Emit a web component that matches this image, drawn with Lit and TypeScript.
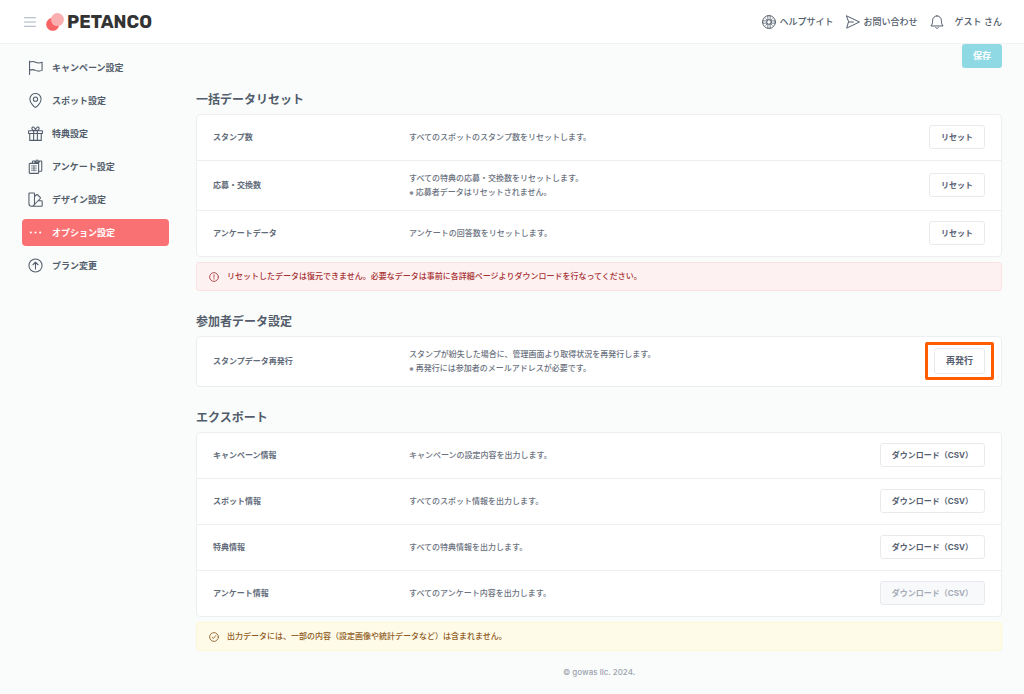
import { LitElement, html, css, svg, nothing } from "lit";
import { customElement, property } from "lit/decorators.js";
import { classMap } from "lit/directives/class-map.js";

const icons: Record<string, unknown> = {
  flag: svg`<path d="M2.500 23V1.800M2.500 3.600c3.400-1.900 6.400-1.500 9.500 0s6.200 1.800 10.500 0v13c-4.300 1.900-7.400 1.500-10.500 0s-6.100-1.900-9.500 0"/>`,
  pin: svg`<path d="M12 23c-1.500 0-9-7.600-9-13.200a9 9 0 0 1 18 0C21 15.400 13.500 23 12 23z"/><circle cx="12" cy="9.800" r="3.400"/>`,
  gift: svg`<path d="M1 7.500h22v4.500H1zM2.800 12v11h18.400V12M9 7.500V23M15 7.500V23M12 7.300C8 7.300 5.500 5.500 6.300 3 7.200.5 11.500 1.300 12 7.300zM12 7.300c4 0 6.500-1.800 5.700-4.300C16.800.5 12.500 1.300 12 7.300z"/>`,
  survey: svg`<path d="M6.500 7H3.200C2.500 7 2 7.500 2 8.200v13.600c0 .7.500 1.200 1.200 1.200h12.600c.7 0 1.200-.5 1.200-1.200V7H6.500zM7 7V4.500c0-.7.500-1.200 1.200-1.200h2.300M18 3.300h2.800c.7 0 1.200.5 1.200 1.200v13.800c0 .7-.5 1.200-1.200 1.200H17M11 5V3.500h1.500a2 2 0 0 1 4 0H18V5z"/><path stroke-width="1.200" d="M5.500 11h8M5.500 14.500h8M5.500 18h8M9.500 11v8"/>`,
  design: svg`<path d="M2.500 1.500h6.700c.7 0 1.200.5 1.200 1.200v15.800a4.300 4.300 0 0 1-8.900 0v-16c0-.5.400-1 1-1zM10.400 7.500l3.100-3.100c.5-.5 1.200-.5 1.700 0l4.300 4.300c.5.500.5 1.200 0 1.700L8.500 22M16.500 14h5c.7 0 1.200.5 1.200 1.200v6.300c0 .7-.5 1.200-1.200 1.200H6"/>`,
  dots: svg`<g fill="currentColor" stroke="none"><circle cx="4.500" cy="12" r="1.700"/><circle cx="12" cy="12" r="1.700"/><circle cx="19.500" cy="12" r="1.700"/></g>`,
  up: svg`<circle cx="12" cy="12" r="10.500"/><path d="M12 17.500V7M8 10.800 12 6.800l4 4"/>`,
  ring: svg`<circle cx="12" cy="12" r="11"/><circle cx="12" cy="12" r="4"/><path stroke-width="1.300" d="M10 1.500v6.800M14 1.500v6.800M10 15.700v6.800M14 15.700v6.800M1.500 10h6.800M1.500 14h6.800M15.700 10h6.800M15.700 14h6.800M6.500 6.500l2.500 2.500M17.500 6.500 15 9M6.500 17.500 9 15M17.500 17.500 15 15"/>`,
  send: svg`<path d="M1.200 1.500 23 12 1.200 22.500 4.200 12zM4.200 12h8.500"/>`,
  bell: svg`<path d="M12 1.500a7.500 7.500 0 0 1 7.500 7.500c0 6 1.200 8 3 9.800h-21c1.800-1.800 3-3.800 3-9.800A7.500 7.500 0 0 1 12 1.500zM9.500 21.300c.5 1.100 1.400 1.500 2.500 1.500s2-.4 2.500-1.500"/>`,
  menu: svg`<path d="M1 3.500h22M1 12h22M1 20.500h22"/>`,
  alert: svg`<circle cx="12" cy="12" r="10.500"/><path d="M12 6.800v6M12 15.800v1.200"/>`,
  check: svg`<circle cx="12" cy="12" r="10.500"/><path d="m7.500 13 2.800 2.500 6-7"/>`,
};

const icon = (name: string) => html`<svg class="icon icon-${name}" viewBox="0 0 24 24" aria-hidden="true">${icons[name]}</svg>`;

const shared = css`
  * {
    box-sizing: border-box;
  }
  .icon {
    display: block;
    flex: none;
    width: 14px;
    height: 14px;
    fill: none;
    stroke: currentColor;
    stroke-width: 1.700;
    stroke-linecap: round;
    stroke-linejoin: round;
  }
  button {
    font-family: inherit;
    cursor: pointer;
  }
  a {
    color: inherit;
    text-decoration: none;
  }
`;

interface Row {
  label: string;
  lines: string[];
  action: string;
  disabled?: boolean;
  marked?: boolean;
}

@customElement("app-header")
class AppHeader extends LitElement {
  static styles = [
    shared,
    css`
      :host {
        display: block;
      }
      .bar {
        display: flex;
        align-items: center;
        height: 44px;
        padding: 0 22px 0 24px;
        background: #fff;
        border-bottom: 1px solid #f0f2f3;
      }
      .menu {
        display: flex;
        padding: 0;
        border: 0;
        background: none;
        color: #a8b0be;
      }
      .icon-menu {
        width: 12px;
        height: 12px;
        stroke-width: 2;
      }
      .brand {
        display: flex;
        align-items: center;
        gap: 3px;
        margin-left: 10px;
        color: #333;
        font-family: Rubik, Inter, sans-serif;
        font-size: 18px;
        font-weight: 700;
        line-height: 20px;
      }
      .mark {
        width: 18px;
        height: 18px;
      }
      .links {
        display: flex;
        align-items: center;
        gap: 12px;
        margin-left: auto;
        font-size: 9px;
        font-weight: 500;
        line-height: 16px;
      }
      .link {
        display: flex;
        align-items: center;
        gap: 4px;
      }
      .user {
        gap: 11px;
      }
    `,
  ];

  render() {
    return html`
      <header class="bar">
        <button class="menu" aria-label="メニュー">${icon("menu")}</button>
        <a class="brand" href="#">
          <svg class="mark" viewBox="0 0 18 18" aria-hidden="true">
            <circle cx="6.700" cy="11.300" r="6.500" fill="#f86466" />
            <circle cx="11.400" cy="6.600" r="6.500" fill="#fbaeb0" />
          </svg>
          <span>PETANCO</span>
        </a>
        <nav class="links">
          <a class="link" href="#">${icon("ring")}<span>ヘルプサイト</span></a>
          <a class="link" href="#">${icon("send")}<span>お問い合わせ</span></a>
          <a class="link user" href="#">${icon("bell")}<span>ゲスト さん</span></a>
        </nav>
      </header>
    `;
  }
}

@customElement("side-nav")
class SideNav extends LitElement {
  static styles = [
    shared,
    css`
      :host {
        display: block;
      }
      .list {
        display: flex;
        flex-direction: column;
        gap: 6px;
      }
      .item {
        display: flex;
        align-items: center;
        gap: 9px;
        height: 27px;
        padding: 0 6px;
        border-radius: 4px;
        font-size: 9px;
        font-weight: 700;
        line-height: 16px;
      }
      .item .icon {
        width: 15px;
        height: 15px;
      }
      .active {
        background: #f97173;
        color: #fff;
      }
    `,
  ];

  private items = [
    ["flag", "キャンペーン設定"],
    ["pin", "スポット設定"],
    ["gift", "特典設定"],
    ["survey", "アンケート設定"],
    ["design", "デザイン設定"],
    ["dots", "オプション設定"],
    ["up", "プラン変更"],
  ];

  render() {
    return html`<nav class="list">
      ${this.items.map(
        ([name, label]) => html`<a class=${classMap({ item: true, active: name === "dots" })} href="#">${icon(name)}<span>${label}</span></a>`
      )}
    </nav>`;
  }
}

@customElement("settings-section")
class SettingsSection extends LitElement {
  @property() heading = "";
  @property({ attribute: false }) rows: Row[] = [];
  @property() notice = "";
  @property() tone = "";

  static styles = [
    shared,
    css`
      :host {
        display: flex;
        flex-direction: column;
        gap: 5px;
      }
      .heading {
        margin: 0;
        font-size: 12px;
        font-weight: 700;
        line-height: 18px;
      }
      .card {
        margin: 0;
        padding: 0;
        list-style: none;
        background: #fff;
        border: 1px solid #eceef1;
        border-radius: 4px;
      }
      .row {
        display: grid;
        grid-template-columns: 184px 1fr auto;
        column-gap: 12px;
        align-items: center;
        padding: 10px 16px 11px;
        font-size: 8px;
        line-height: 14px;
      }
      .row + .row {
        border-top: 1px solid #eceef1;
      }
      .label {
        font-weight: 700;
        color: #626b7a;
      }
      .text {
        margin: 0;
        font-weight: 500;
        color: #6b7280;
      }
      .line {
        display: block;
      }
      .mark {
        margin-right: 2px;
        font-size: 6px;
        font-weight: 700;
        line-height: 1;
      }
      .slot {
        position: relative;
        display: flex;
      }
      .button {
        height: 24px;
        padding: 0 11px;
        background: #fff;
        border: 1px solid #e8eaee;
        border-radius: 3px;
        color: #566070;
        font-size: 8px;
        font-weight: 700;
        line-height: 14px;
      }
      .button:disabled {
        background: #f8f9fb;
        color: #a5abb6;
        cursor: default;
      }
      .large {
        height: 26px;
        font-size: 9px;
      }
      .frame {
        position: absolute;
        inset: -6px -9px;
        border: 3px solid #ff5c00;
        border-radius: 2px;
        pointer-events: none;
      }
      .notice {
        display: flex;
        align-items: center;
        gap: 8px;
        margin: 0;
        padding: 6px 12px;
        border: 1px solid;
        border-radius: 3px;
        font-size: 8px;
        font-weight: 500;
        line-height: 15px;
      }
      .notice .icon {
        width: 10px;
        height: 10px;
        stroke-width: 2;
      }
      .danger {
        background: #fef1f1;
        border-color: #fce3e3;
        color: #a63234;
      }
      .info {
        background: #fefbe8;
        border-color: #fdf7d3;
        color: #8f5a22;
      }
    `,
  ];

  private line(text: string) {
    return text.startsWith("※")
      ? html`<span class="line"><span class="mark">※</span>${text.slice(1).trim()}</span>`
      : html`<span class="line">${text}</span>`;
  }

  render() {
    return html`
      <h2 class="heading">${this.heading}</h2>
      <ul class="card">
        ${this.rows.map(
          (row) => html`<li class="row">
            <span class="label">${row.label}</span>
            <p class="text">${row.lines.map((l) => this.line(l))}</p>
            <div class="slot">
              <button class=${classMap({ button: true, large: !!row.marked })} ?disabled=${!!row.disabled}>${row.action}</button>
              ${row.marked ? html`<span class="frame"></span>` : nothing}
            </div>
          </li>`
        )}
      </ul>
      ${this.notice
        ? html`<p class="notice ${this.tone}">${icon(this.tone === "danger" ? "alert" : "check")}<span>${this.notice}</span></p>`
        : nothing}
    `;
  }
}

@customElement("app-root")
class AppRoot extends LitElement {
  static styles = [
    shared,
    css`
      :host {
        display: block;
        min-height: 100vh;
        background: #fafcfb;
        color: #525c6b;
        font-family: Inter, "Noto Sans CJK JP", sans-serif;
      }
      .layout {
        display: grid;
        grid-template-columns: 147px minmax(0, 1fr);
        column-gap: 27px;
        padding: 0 22px;
      }
      .side {
        padding-top: 10px;
      }
      .main {
        display: flex;
        flex-direction: column;
        gap: 22px;
      }
      .actions {
        display: flex;
        justify-content: flex-end;
        padding-bottom: 1px;
      }
      .save {
        height: 24px;
        padding: 0 11px;
        border: 0;
        border-radius: 3px;
        background: #8fd9e5;
        color: #fff;
        font-size: 9px;
        font-weight: 700;
        line-height: 14px;
      }
      .footer {
        padding-bottom: 14px;
        margin-top: -8px;
        color: #9ca3af;
        font-size: 8px;
        font-weight: 500;
        line-height: 14px;
        text-align: center;
      }
    `,
  ];

  private resetRows: Row[] = [
    { label: "スタンプ数", lines: ["すべてのスポットのスタンプ数をリセットします。"], action: "リセット" },
    { label: "応募・交換数", lines: ["すべての特典の応募・交換数をリセットします。", "※ 応募者データはリセットされません。"], action: "リセット" },
    { label: "アンケートデータ", lines: ["アンケートの回答数をリセットします。"], action: "リセット" },
  ];

  private memberRows: Row[] = [
    {
      label: "スタンプデータ再発行",
      lines: ["スタンプが紛失した場合に、管理画面より取得状況を再発行します。", "※ 再発行には参加者のメールアドレスが必要です。"],
      action: "再発行",
      marked: true,
    },
  ];

  private exportRows: Row[] = [
    { label: "キャンペーン情報", lines: ["キャンペーンの設定内容を出力します。"], action: "ダウンロード（CSV）" },
    { label: "スポット情報", lines: ["すべてのスポット情報を出力します。"], action: "ダウンロード（CSV）" },
    { label: "特典情報", lines: ["すべての特典情報を出力します。"], action: "ダウンロード（CSV）" },
    { label: "アンケート情報", lines: ["すべてのアンケート内容を出力します。"], action: "ダウンロード（CSV）", disabled: true },
  ];

  render() {
    return html`
      <app-header></app-header>
      <div class="layout">
        <side-nav class="side"></side-nav>
        <main class="main">
          <div class="actions"><button class="save">保存</button></div>
          <settings-section
            heading="一括データリセット"
            .rows=${this.resetRows}
            tone="danger"
            notice="リセットしたデータは復元できません。必要なデータは事前に各詳細ページよりダウンロードを行なってください。"
          ></settings-section>
          <settings-section heading="参加者データ設定" .rows=${this.memberRows}></settings-section>
          <settings-section
            heading="エクスポート"
            .rows=${this.exportRows}
            tone="info"
            notice="出力データには、一部の内容（設定画像や統計データなど）は含まれません。"
          ></settings-section>
          <footer class="footer">© gowas llc. 2024.</footer>
        </main>
      </div>
    `;
  }
}
